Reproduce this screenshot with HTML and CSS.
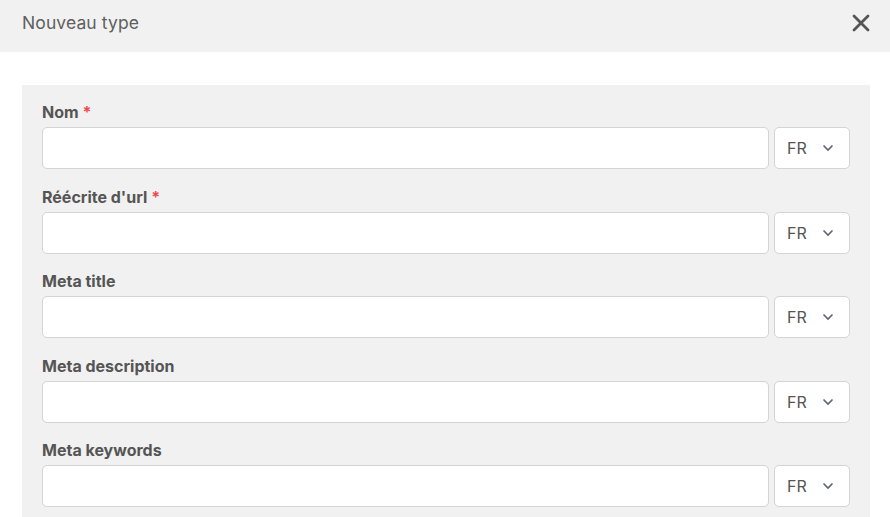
FILE: index.html
```html
<!DOCTYPE html>
<html lang="fr">
<head>
  <meta charset="UTF-8">
  <title>Nouveau type</title>
  <link rel="stylesheet" href="styles.css">
</head>
<body>

<div class="modal">
  <div class="modal-header">
    <span class="modal-title">Nouveau type</span>
    <button class="close" aria-label="Fermer">
      <svg width="18" height="18" viewBox="0 0 18 18"><path d="M2 2 L16 16 M16 2 L2 16" stroke="#555" stroke-width="2.8" stroke-linecap="round"/></svg>
    </button>
  </div>

  <div class="modal-body">
    <div class="panel">
      <div class="field">
        <label>Nom <span class="req">*</span></label>
        <div class="row">
          <input type="text">
          <div class="lang">FR <svg width="12" height="8" viewBox="0 0 12 8"><path d="M1.5 1.5 L6 6 L10.5 1.5" fill="none" stroke="#5f6370" stroke-width="1.6"/></svg></div>
        </div>
      </div>
      <div class="field">
        <label>Réécrite d'url <span class="req">*</span></label>
        <div class="row">
          <input type="text">
          <div class="lang">FR <svg width="12" height="8" viewBox="0 0 12 8"><path d="M1.5 1.5 L6 6 L10.5 1.5" fill="none" stroke="#5f6370" stroke-width="1.6"/></svg></div>
        </div>
      </div>
      <div class="field">
        <label>Meta title</label>
        <div class="row">
          <input type="text">
          <div class="lang">FR <svg width="12" height="8" viewBox="0 0 12 8"><path d="M1.5 1.5 L6 6 L10.5 1.5" fill="none" stroke="#5f6370" stroke-width="1.6"/></svg></div>
        </div>
      </div>
      <div class="field">
        <label>Meta description</label>
        <div class="row">
          <input type="text">
          <div class="lang">FR <svg width="12" height="8" viewBox="0 0 12 8"><path d="M1.5 1.5 L6 6 L10.5 1.5" fill="none" stroke="#5f6370" stroke-width="1.6"/></svg></div>
        </div>
      </div>
      <div class="field">
        <label>Meta keywords</label>
        <div class="row">
          <input type="text">
          <div class="lang">FR <svg width="12" height="8" viewBox="0 0 12 8"><path d="M1.5 1.5 L6 6 L10.5 1.5" fill="none" stroke="#5f6370" stroke-width="1.6"/></svg></div>
        </div>
      </div>
    </div>
  </div>
</div>

</body>
</html>
```

FILE: styles.css
```css
* { box-sizing: border-box; }

body {
  margin: 0;
  background: #fff;
  font-family: Inter, "Noto Sans", sans-serif;
  color: #555;
  overflow: hidden;
}

.modal-header {
  height: 52px;
  background: #f1f1f1;
  display: flex;
  align-items: center;
  justify-content: space-between;
  padding: 0 20px 7px 22px;
}

.modal-title {
  font-size: 17.5px;
  color: #5f5f5f;
  letter-spacing: 0.1px;
}

.close {
  background: none;
  border: none;
  padding: 0;
  display: flex;
  cursor: pointer;
}

.modal-body {
  padding: 33px 20px 0 22px;
}

.panel {
  background: #f1f1f1;
  padding: 17px 20px 20px 20px;
  display: flex;
  flex-direction: column;
  gap: 17.5px;
}

.field label {
  display: block;
  font-size: 16px;
  line-height: 20px;
  font-weight: 700;
  color: #555;
  margin-bottom: 5px;
}

.req {
  color: #f0474b;
}

.row {
  display: flex;
  gap: 5px;
}

.row input {
  flex: 1;
  height: 42px;
  border: 1px solid #d3d3d8;
  border-radius: 5px;
  background: #fff;
  font: inherit;
}

.lang {
  width: 76px;
  height: 42px;
  border: 1px solid #d3d3d8;
  border-radius: 5px;
  background: #fff;
  display: flex;
  align-items: center;
  justify-content: space-between;
  padding: 0 15px 0 12px;
  font-size: 16px;
  color: #555;
}
```
